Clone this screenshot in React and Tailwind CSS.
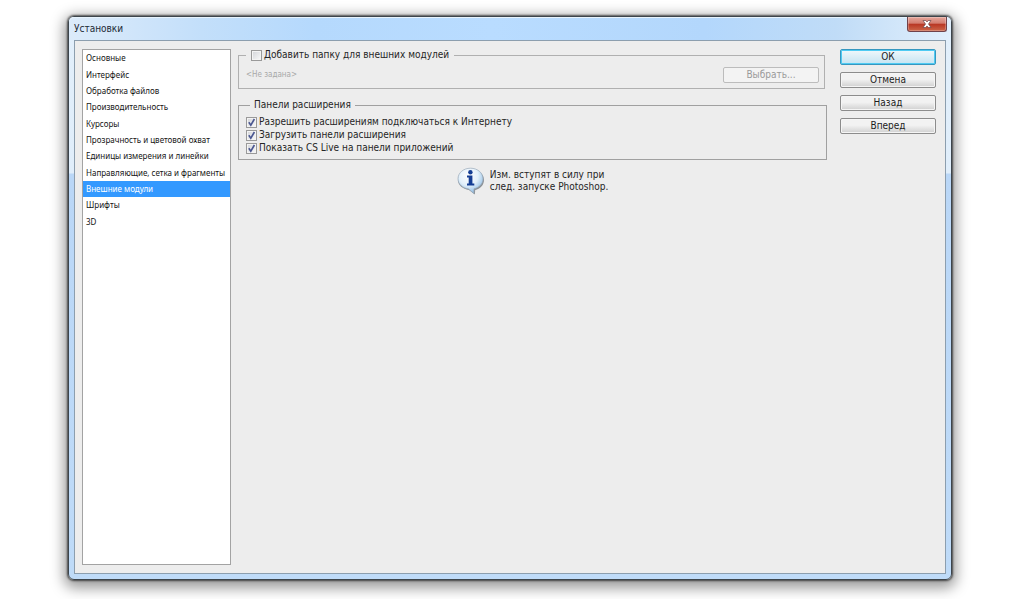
import { useState } from 'react'
import clsx from 'clsx'

const sections = [
    'Основные',
    'Интерфейс',
    'Обработка файлов',
    'Производительность',
    'Курсоры',
    'Прозрачность и цветовой охват',
    'Единицы измерения и линейки',
    'Направляющие, сетка и фрагменты',
    'Внешние модули',
    'Шрифты',
    '3D',
]

const Checkbox = ({ label, checked, onChange }) => {
    return (
        <label className="flex items-center gap-0.5 w-fit whitespace-nowrap">
            <span className="grid size-[11px] shrink-0">
                <input
                    type="checkbox"
                    checked={checked}
                    onChange={onChange}
                    className="col-start-1 row-start-1 appearance-none size-[11px] border border-[#9a9a9a] bg-linear-to-br from-[#d2d4d8] to-[#fafafa] shadow-[inset_0_0_0_1px_#f4f4f4]"
                />
                {checked && (
                    <svg viewBox="0 0 11 11" className="col-start-1 row-start-1 size-[11px] pointer-events-none" aria-hidden="true">
                        <path d="M2.8 5.2 L4.8 8.2 L8.4 2" fill="none" stroke="#4a5791" strokeWidth="1.6" />
                    </svg>
                )}
            </span>
            {label}
        </label>
    )
}

const DialogButton = ({ children, primary }) => {
    return (
        <button
            type="button"
            className={clsx(
                'flex h-4 w-full items-center justify-center rounded-[2px] border text-[10px] leading-3 text-[#1c1c1c]',
                primary
                    ? 'border-[#3797bf] bg-linear-to-b from-[#f0f8fb] to-[#c5e4f2] shadow-[inset_0_0_0_1px_#4fcbf3]'
                    : 'border-[#8c8c8c] bg-linear-to-b from-[#f2f2f2] from-45% to-[#d0d0d0] shadow-[inset_0_0_0_1px_#f5f5f5]'
            )}
        >
            {children}
        </button>
    )
}

const InfoIcon = () => {
    return (
        <svg viewBox="0 0 28 28" className="size-7 shrink-0" aria-hidden="true">
            <defs>
                <radialGradient id="bubble" cx="42%" cy="30%" r="70%">
                    <stop offset="0" stopColor="#ffffff" />
                    <stop offset="0.55" stopColor="#e3f0fa" />
                    <stop offset="1" stopColor="#8dbbe3" />
                </radialGradient>
            </defs>
            <path
                d="M14 2.5 C21.3 2.5 27 6.9 27 13 C27 18.2 23 21.8 18.2 23 L17.8 27.6 L12 23 C6 22 1 18.5 1 13 C1 6.9 6.7 2.5 14 2.5 Z"
                fill="#5f666e"
                opacity="0.7"
            />
            <path
                d="M13.5 1.2 C20.5 1.2 26 5.8 26 11.8 C26 17 22 20.8 17 21.8 L16.8 26.4 L11.5 21.9 C5.500 21 1 17.2 1 11.8 C1 5.8 6.5 1.2 13.5 1.2 Z"
                fill="url(#bubble)"
                stroke="#9aa9b9"
                strokeWidth="0.7"
            />
            <circle cx="13.4" cy="5.3" r="2.2" fill="#153e94" />
            <path d="M10 8.6 H15.4 V16.6 H17.3 V18.400 H10 V16.6 H11.7 V10.400 H10 Z" fill="#153e94" />
        </svg>
    )
}

const App = () => {
    const [active, setActive] = useState('Внешние модули')
    const [options, setOptions] = useState({
        folder: false,
        internet: true,
        panels: true,
        live: true,
    })

    const toggle = (key) => setOptions({ ...options, [key]: !options[key] })

    return (
        <div className="flex min-h-screen bg-white pt-4 pr-[72px] pb-[19px] pl-[68px] font-['DejaVu_Sans_Condensed','DejaVu_Sans',sans-serif] text-[10px] leading-3 text-[#252525]">
            <div className="flex min-w-0 flex-1 flex-col rounded-md border border-[#3d454c] bg-[linear-gradient(#e2effb_0px,#e0eefb_156px,#bad7f7_157px,#bfdbf8_100%)] px-[5px] pb-[5px] shadow-[0_0_2px_1px_rgba(0,0,0,0.6),0_4px_14px_4px_rgba(0,0,0,0.4)]">
                {/* Title bar */}
                <header className="-mx-[5px] flex h-[23px] shrink-0 justify-between rounded-t-[5px] bg-[linear-gradient(90deg,#dcebfa_0%,#c3dffa_15%,#b5d9fd_28%,#b9dcff_48%,#b3d7fc_72%,#c0dcf7_87%,#e1effc_100%)] pr-1 pl-[5px] shadow-[inset_0_1px_0_#e8f4fd]">
                    <h1 className="self-center text-[10px] leading-3 text-[#1d2a36]">Установки</h1>
                    <button
                        type="button"
                        aria-label="Закрыть"
                        className="flex h-[15px] w-10 items-center justify-center rounded-b-[3px] border border-t-0 border-[#70424a] bg-[linear-gradient(#e6a79c_0%,#d37c6f_45%,#b83523_50%,#cc6649_100%)] shadow-[inset_0_0_0_1px_rgba(255,255,255,0.25)]"
                    >
                        <svg viewBox="0 0 10 8" className="h-2 w-2.5" aria-hidden="true">
                            <path d="M1 0.5 H3.8 L5 2 L6.2 0.5 H9 L6.5 4 L9 7.5 H6.2 L5 6 L3.8 7.5 H1 L3.5 4 Z" fill="#fff" stroke="#6b4549" strokeWidth="0.7" />
                        </svg>
                    </button>
                </header>

                <div className="flex flex-1 border border-[#8c9eae] bg-[#ededed] py-2 pr-[9px] pl-[7px]">
                    {/* Sections */}
                    <nav className="w-[149px] shrink-0 border border-[#a3a3a3] bg-white">
                        <ul className="grid h-[180px] auto-rows-fr grid-cols-1 font-['Noto_Sans',sans-serif] text-[8px] leading-3">
                            {sections.map((name) => (
                                <li key={name} className="flex min-w-0">
                                    <button
                                        type="button"
                                        onClick={() => setActive(name)}
                                        className={clsx(
                                            'w-full min-w-0 pl-[3px] text-left whitespace-nowrap',
                                            active === name ? 'bg-[#3399ff] text-white' : 'text-[#151515]'
                                        )}
                                    >
                                        {name}
                                    </button>
                                </li>
                            ))}
                        </ul>
                    </nav>

                    <main className="min-w-0 flex-1 pr-[13px] pl-[7px]">
                        <fieldset className="mr-0.5 border border-[#b0b0b0] pr-[5px] pb-[5px] pl-[7px]">
                            <legend className="px-[5px]">
                                <Checkbox
                                    label="Добавить папку для внешних модулей"
                                    checked={options.folder}
                                    onChange={() => toggle('folder')}
                                />
                            </legend>
                            <div className="flex items-center justify-between pt-1.5">
                                <span className="text-[8px] text-[#a8a8a8]">&lt;Не задана&gt;</span>
                                <button
                                    type="button"
                                    disabled
                                    className="h-4 w-24 rounded-[2px] border border-[#bcbcbc] bg-[#f3f3f3] text-[10px] leading-3 text-[#9a9a9a]"
                                >
                                    Выбрать...
                                </button>
                            </div>
                        </fieldset>

                        <fieldset className="mt-2.5 border border-[#a0a0a0] px-[7px] pb-[5px]">
                            <legend className="ml-1 px-1">Панели расширения</legend>
                            <div className="flex flex-col gap-px pt-[5px]">
                                <Checkbox
                                    label="Разрешить расширениям подключаться к Интернету"
                                    checked={options.internet}
                                    onChange={() => toggle('internet')}
                                />
                                <Checkbox
                                    label="Загрузить панели расширения"
                                    checked={options.panels}
                                    onChange={() => toggle('panels')}
                                />
                                <Checkbox
                                    label="Показать CS Live на панели приложений"
                                    checked={options.live}
                                    onChange={() => toggle('live')}
                                />
                            </div>
                        </fieldset>

                        {/* Restart note */}
                        <div className="mt-[7px] flex items-center justify-center gap-[5px]">
                            <InfoIcon />
                            <p>
                                Изм. вступят в силу при
                                <br />
                                след. запуске Photoshop.
                            </p>
                        </div>
                    </main>

                    <div className="flex w-24 shrink-0 flex-col gap-[7px]">
                        <DialogButton primary>ОК</DialogButton>
                        <DialogButton>Отмена</DialogButton>
                        <DialogButton>Назад</DialogButton>
                        <DialogButton>Вперед</DialogButton>
                    </div>
                </div>
            </div>
        </div>
    )
}

export default App
